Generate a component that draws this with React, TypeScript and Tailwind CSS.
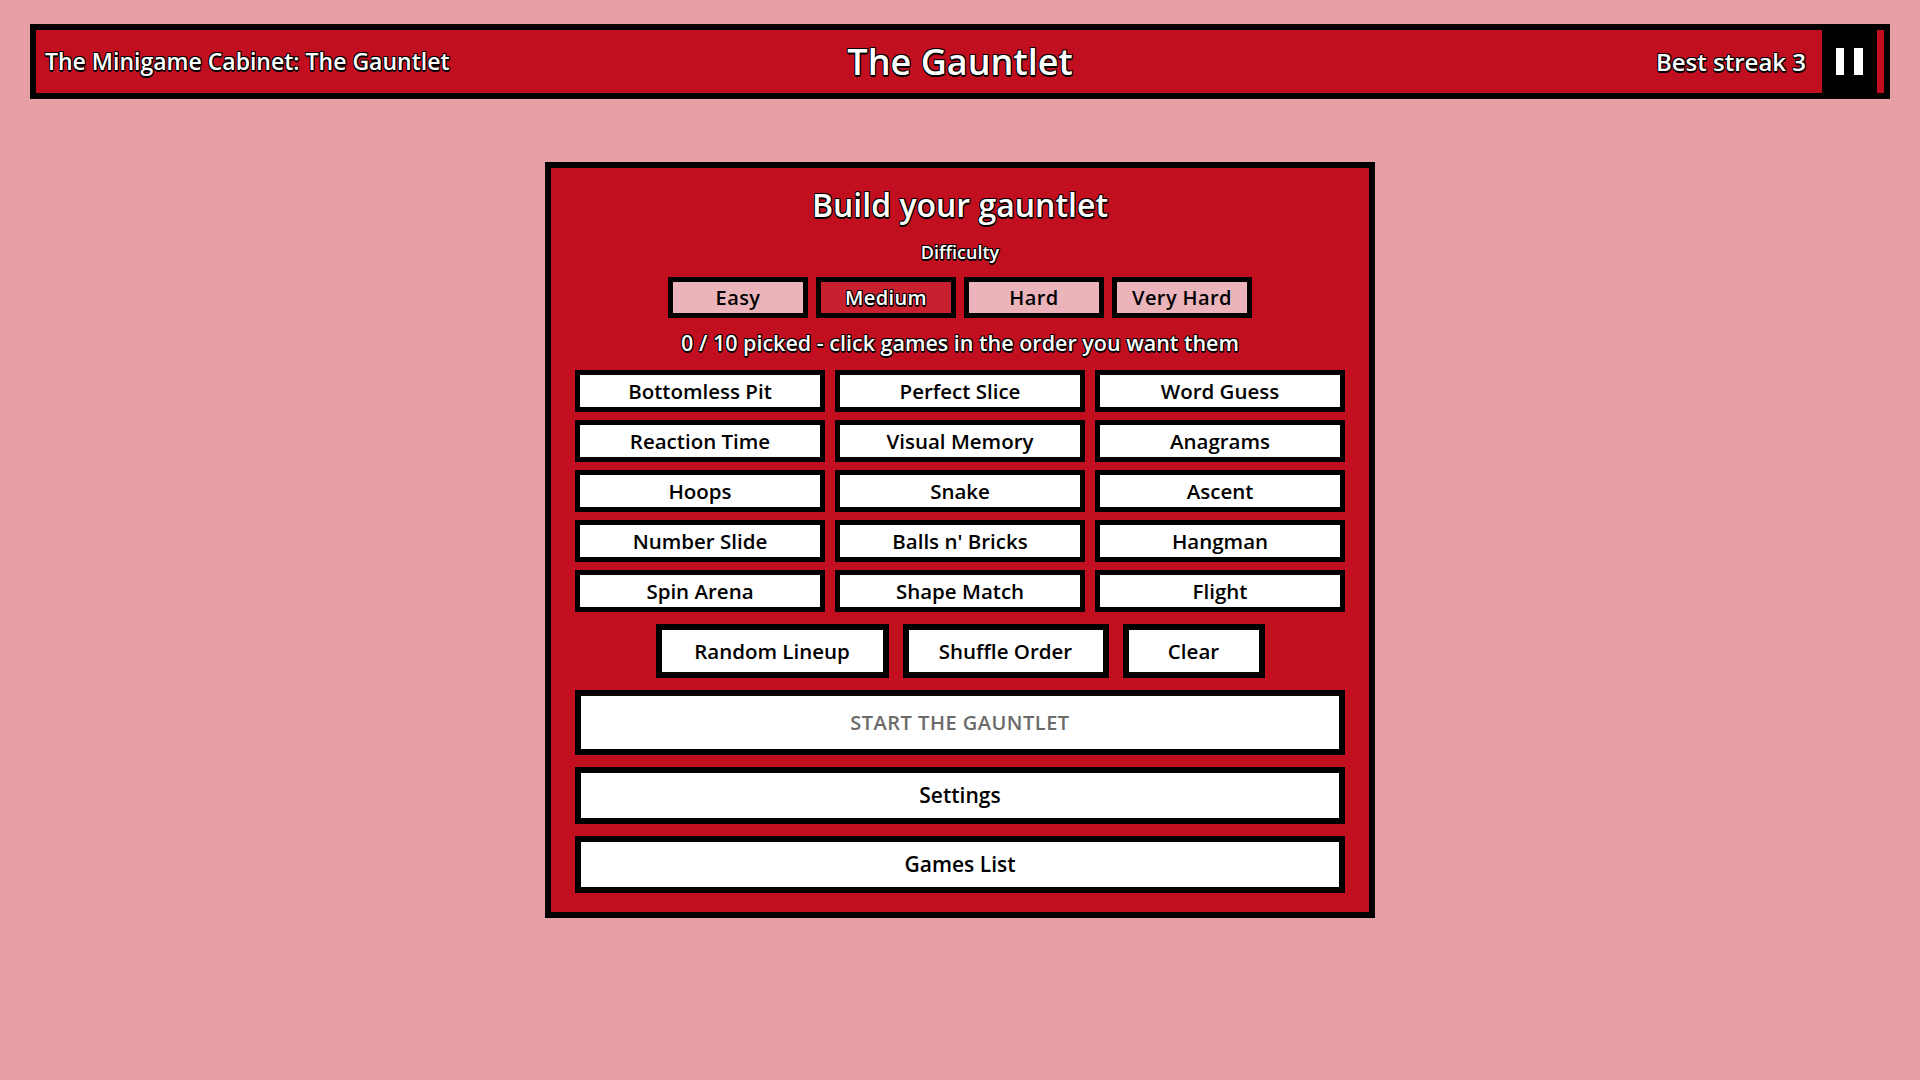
import React from "react";

const outline =
  "[text-shadow:-1px_-1px_0_#000,1px_-1px_0_#000,-1px_1px_0_#000,1px_1px_0_#000,0_2px_0_#000]";

const GAMES = [
  "Bottomless Pit",
  "Perfect Slice",
  "Word Guess",
  "Reaction Time",
  "Visual Memory",
  "Anagrams",
  "Hoops",
  "Snake",
  "Ascent",
  "Number Slide",
  "Balls n' Bricks",
  "Hangman",
  "Spin Arena",
  "Shape Match",
  "Flight",
];

const DIFFICULTIES = ["Easy", "Medium", "Hard", "Very Hard"];

function Header() {
  return (
    <header className="grid h-[75px] grid-cols-[1fr_auto_1fr] border-[6px] border-black bg-[#c10f1f]">
      <div className="flex items-center pl-[9px]">
        <span className={`text-[23px] font-semibold text-white ${outline}`}>
          The Minigame Cabinet: The Gauntlet
        </span>
      </div>
      <div className="flex items-center">
        <h1 className={`text-[36px] font-semibold leading-[44px] text-white ${outline}`}>The Gauntlet</h1>
      </div>
      <div className="flex items-stretch justify-end pr-[7px]">
        <span className={`mr-4 flex items-center text-[24px] font-semibold text-white ${outline}`}>
          Best streak 3
        </span>
        <button className="flex w-[55px] items-center justify-center gap-[10px] bg-black" aria-label="Pause">
          <span className="h-[27px] w-[8px] bg-white" />
          <span className="h-[27px] w-[9px] bg-white" />
        </button>
      </div>
    </header>
  );
}

function Panel() {
  return (
    <section className="w-[830px] border-[6px] border-black bg-[#c10f1f] px-6 pb-[19px] pt-[19px]">
      <h2 className={`text-center text-[32px] font-semibold leading-[36px] text-white ${outline}`}>
        Build your gauntlet
      </h2>
      <p className={`mt-[19px] text-center text-[18px] font-semibold leading-[20px] text-white ${outline}`}>
        Difficulty
      </p>
      <div className="mt-[15px] flex justify-center gap-2">
        {DIFFICULTIES.map((d) => {
          const active = d === "Medium";
          return (
            <button
              key={d}
              className={
                active
                  ? `flex h-[41px] w-[140px] items-center justify-center border-[5px] border-black bg-[#c9202f] text-[20px] font-semibold tracking-[0.02em] text-white ${outline}`
                  : "flex h-[41px] w-[140px] items-center justify-center border-[5px] border-black bg-[#ebb4bb] text-[20px] font-semibold tracking-[0.02em] text-black"
              }
            >
              {d}
            </button>
          );
        })}
      </div>
      <p className={`mt-[13px] text-center text-[21.5px] font-semibold leading-[24px] text-white ${outline}`}>
        0 / 10 picked - click games in the order you want them
      </p>
      <div className="mt-[15px] grid grid-cols-3 gap-x-[10px] gap-y-2">
        {GAMES.map((g) => (
          <button
            key={g}
            className="flex h-[42px] items-center justify-center border-[5px] border-black bg-white text-[20.5px] font-semibold text-black"
          >
            {g}
          </button>
        ))}
      </div>
      <div className="mt-3 flex justify-center gap-[14px]">
        <button className="flex h-[54px] w-[233px] items-center justify-center border-[6px] border-black bg-white text-[20.5px] font-semibold text-black">
          Random Lineup
        </button>
        <button className="flex h-[54px] w-[206px] items-center justify-center border-[6px] border-black bg-white text-[20.5px] font-semibold text-black">
          Shuffle Order
        </button>
        <button className="flex h-[54px] w-[142px] items-center justify-center border-[6px] border-black bg-white text-[20.5px] font-semibold text-black">
          Clear
        </button>
      </div>
      <button className="mt-3 flex h-[65px] w-full items-center justify-center border-[6px] border-black bg-white text-[20px] font-semibold tracking-wide text-[#6b6b6b]">
        START THE GAUNTLET
      </button>
      <button className="mt-3 flex h-[57px] w-full items-center justify-center border-[6px] border-black bg-white text-[21px] font-semibold text-black">
        Settings
      </button>
      <button className="mt-3 flex h-[57px] w-full items-center justify-center border-[6px] border-black bg-white text-[21px] font-semibold text-black">
        Games List
      </button>
    </section>
  );
}

export default function App() {
  return (
    <div
      className="min-h-screen w-full bg-[#e69fa5] px-[30px] pt-6"
      style={{ fontFamily: '"Open Sans", "Noto Sans", sans-serif' }}
    >
      <Header />
      <main className="flex justify-center pt-[63px]">
        <Panel />
      </main>
    </div>
  );
}
